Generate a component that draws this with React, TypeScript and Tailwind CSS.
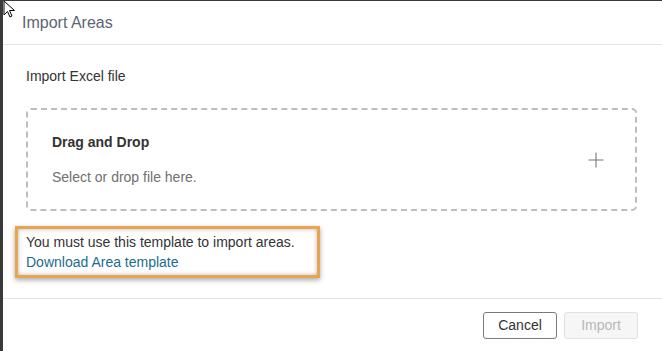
import { Plus } from "lucide-react";

function Cursor() {
    return (
        <svg
            className="absolute left-[3px] top-0"
            width="14"
            height="19"
            viewBox="0 0 14 19"
        >
            <path
                d="M1 1 L1 15 L4.5 11.5 L7 17 L9 16 L6.5 10.5 L11.5 10.5 Z"
                fill="#fff"
                stroke="#000"
                strokeWidth="1"
                strokeLinejoin="round"
            />
        </svg>
    );
}

export default function App() {
    return (
        <div
            className="relative w-[662px] h-[351px] bg-[#3a3a3a] pl-[3px] pt-px overflow-hidden"
            style={{ fontFamily: '"Liberation Sans", Arial, sans-serif' }}
        >
            <div className="h-full bg-white flex flex-col">
                {/* Header */}
                <div className="h-[44px] shrink-0 border-b border-[#e3e3e3] flex items-center pl-[19px]">
                    <span className="text-[16px] text-[#5d6470]">Import Areas</span>
                </div>

                {/* Body */}
                <div className="flex-1 pl-[23px] pr-[25px] pt-[23px]">
                    <div className="text-[14px] leading-4 text-[#333]">Import Excel file</div>

                    <div className="mt-[24px] h-[103px] border-2 border-dashed border-[#bdbdbd] rounded-[5px] flex items-center pl-[24px] pr-[27px]">
                        <div className="flex-1 flex flex-col">
                            <span className="text-[14px] leading-4 font-bold text-[#333]">
                                Drag and Drop
                            </span>
                            <span className="mt-[19px] text-[14px] leading-4 text-[#707070]">
                                Select or drop file here.
                            </span>
                        </div>
                        <Plus size={24} strokeWidth={1.1} className="text-[#777] mt-px" />
                    </div>

                    <div className="mt-[15px] -ml-[11px] w-[305px] border-[3px] border-[#e8a44e] pl-[8px] pt-[3px] pb-[3px] shadow-[0_2px_5px_rgba(0,0,0,0.35),inset_0_0_4px_rgba(0,0,0,0.3)]">
                        <div className="text-[14px] leading-5 text-[#333]">
                            You must use this template to import areas.
                        </div>
                        <a className="block text-[14px] leading-5 text-[#1b6d8e] cursor-pointer">
                            Download Area template
                        </a>
                    </div>
                </div>

                {/* Footer */}
                <div className="h-[53px] shrink-0 border-t border-[#e3e3e3] flex justify-end items-start pt-[13px] pr-[24px] gap-[7px]">
                    <button className="w-[74px] h-[27px] border border-[#7a7a7a] rounded-[3px] bg-white text-[14px] text-[#333]">
                        Cancel
                    </button>
                    <button
                        disabled
                        className="w-[74px] h-[27px] border border-[#e0e0e0] rounded-[3px] bg-[#f6f6f6] text-[14px] text-[#b8b8b8]"
                    >
                        Import
                    </button>
                </div>
            </div>
            <Cursor />
        </div>
    );
}
